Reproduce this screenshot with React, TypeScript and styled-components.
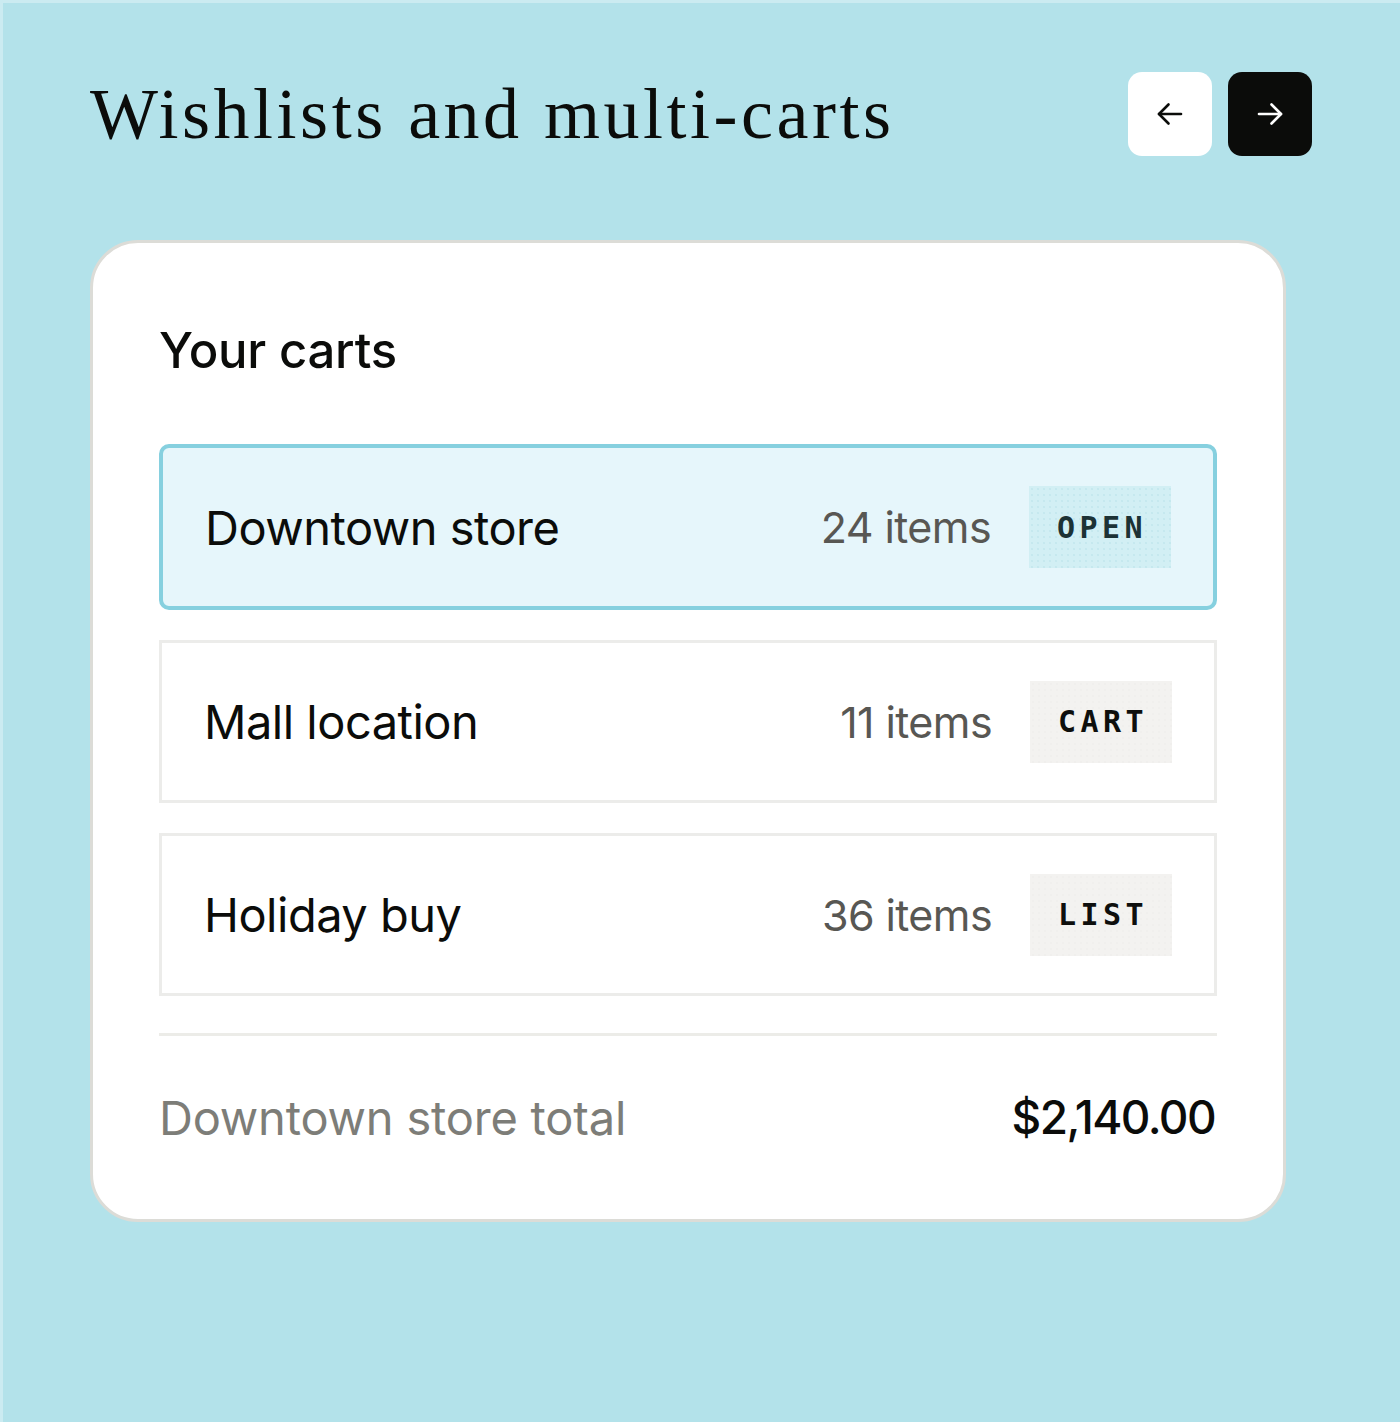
import React from "react";
import styled, { createGlobalStyle } from "styled-components";

const GlobalStyle = createGlobalStyle`
  html, body {
    margin: 0;
    padding: 0;
    background: #b3e2ea;
  }
  * { box-sizing: border-box; }
`;

const Page = styled.div`
  width: 1400px;
  min-height: 1422px;
  background: #b3e2ea;
  border-top: 3px solid #cbebf1;
  border-left: 3px solid #cbebf1;
  padding: 69px 88px 0 87px;
  font-family: Inter, "Noto Sans", sans-serif;
`;

const Header = styled.header`
  display: flex;
  align-items: center;
  justify-content: space-between;
  height: 84px;
`;

const Title = styled.h1`
  margin: 0;
  font-family: "Liberation Serif", "Times New Roman", serif;
  font-weight: 400;
  font-size: 72px;
  letter-spacing: 3.5px;
  color: #0b0c0a;
  line-height: 1;
`;

const NavGroup = styled.div`
  display: flex;
  gap: 16px;
`;

const NavButton = styled.button<{ $dark?: boolean }>`
  width: 84px;
  height: 84px;
  border: none;
  border-radius: 14px;
  display: flex;
  align-items: center;
  justify-content: center;
  padding: 0;
  background: ${(p) => (p.$dark ? "#0b0c0a" : "#ffffff")};
  color: ${(p) => (p.$dark ? "#ffffff" : "#0b0c0a")};
  cursor: pointer;
`;

const Card = styled.section`
  margin-top: 84px;
  width: 1196px;
  background: #ffffff;
  border: 3px solid #dcdcd7;
  border-radius: 48px;
  padding: 80px 66px 74px 66px;
`;

const CardTitle = styled.h2`
  margin: 0 0 66px 0;
  font-size: 49px;
  line-height: 55px;
  font-weight: 500;
  letter-spacing: -0.2px;
  color: #0b0c0a;
`;

const List = styled.div`
  display: flex;
  flex-direction: column;
  gap: 30px;
`;

const Row = styled.div<{ $active?: boolean }>`
  display: flex;
  align-items: center;
  height: ${(p) => (p.$active ? "166px" : "163px")};
  padding: 0 42px;
  border: ${(p) => (p.$active ? "4px solid #86d0df" : "3px solid #ececea")};
  border-radius: ${(p) => (p.$active ? "10px" : "0")};
  background: ${(p) => (p.$active ? "#e6f6fb" : "#ffffff")};
`;

const RowLabel = styled.span`
  flex: 1;
  font-size: 47px;
  font-weight: 400;
  letter-spacing: -0.5px;
  color: #0b0c0a;
`;

const Count = styled.span`
  font-size: 43px;
  font-weight: 400;
  letter-spacing: -0.6px;
  color: #585753;
  margin-right: 38px;
`;

const Badge = styled.span<{ $active?: boolean }>`
  width: 142px;
  height: 82px;
  display: flex;
  align-items: center;
  justify-content: center;
  padding-left: 4px;
  font-family: "DejaVu Sans Mono", "Liberation Mono", monospace;
  font-weight: 700;
  font-size: 30px;
  letter-spacing: 4.5px;
  color: ${(p) => (p.$active ? "#1c3235" : "#0e0f0d")};
  background-color: ${(p) => (p.$active ? "#d2eff4" : "#f3f2f0")};
  background-image: radial-gradient(
    ${(p) => (p.$active ? "rgba(120,190,200,0.14)" : "rgba(0,0,0,0.012)")} 0.7px,
    transparent 1px
  );
  background-size: 6px 6px;
`;

const Divider = styled.hr`
  margin: 37px 0 0 0;
  border: none;
  height: 3px;
  background: #ecece8;
`;

const Footer = styled.div`
  margin-top: 53px;
  height: 56px;
  display: flex;
  align-items: center;
  justify-content: space-between;
`;

const FooterLabel = styled.span`
  font-size: 47px;
  letter-spacing: -0.2px;
  color: #7d7d78;
`;

const Total = styled.span`
  font-size: 46px;
  font-weight: 500;
  letter-spacing: -1.6px;
  color: #0b0c0a;
  margin-right: 2px;
`;

const Arrow = ({ dir }: { dir: "left" | "right" }) => (
  <svg
    width="26"
    height="24"
    viewBox="0 0 26 24"
    fill="none"
    stroke="currentColor"
    strokeWidth="2.6"
    strokeLinecap="round"
    strokeLinejoin="round"
    style={{ transform: dir === "right" ? "scaleX(-1)" : undefined }}
  >
    <path d="M24 12H2" />
    <path d="M11.5 2.5 2 12l9.5 9.5" />
  </svg>
);

type Cart = { name: string; items: number; tag: string; active?: boolean };

const carts: Cart[] = [
  { name: "Downtown store", items: 24, tag: "OPEN", active: true },
  { name: "Mall location", items: 11, tag: "CART" },
  { name: "Holiday buy", items: 36, tag: "LIST" },
];

export default function App() {
  return (
    <>
      <GlobalStyle />
      <Page>
        <Header>
          <Title>Wishlists and multi-carts</Title>
          <NavGroup>
            <NavButton aria-label="Previous">
              <Arrow dir="left" />
            </NavButton>
            <NavButton $dark aria-label="Next">
              <Arrow dir="right" />
            </NavButton>
          </NavGroup>
        </Header>

        <Card>
          <CardTitle>Your carts</CardTitle>
          <List>
            {carts.map((c) => (
              <Row key={c.name} $active={c.active}>
                <RowLabel>{c.name}</RowLabel>
                <Count>{c.items} items</Count>
                <Badge $active={c.active}>{c.tag}</Badge>
              </Row>
            ))}
          </List>
          <Divider />
          <Footer>
            <FooterLabel>Downtown store total</FooterLabel>
            <Total>$2,140.00</Total>
          </Footer>
        </Card>
      </Page>
    </>
  );
}
